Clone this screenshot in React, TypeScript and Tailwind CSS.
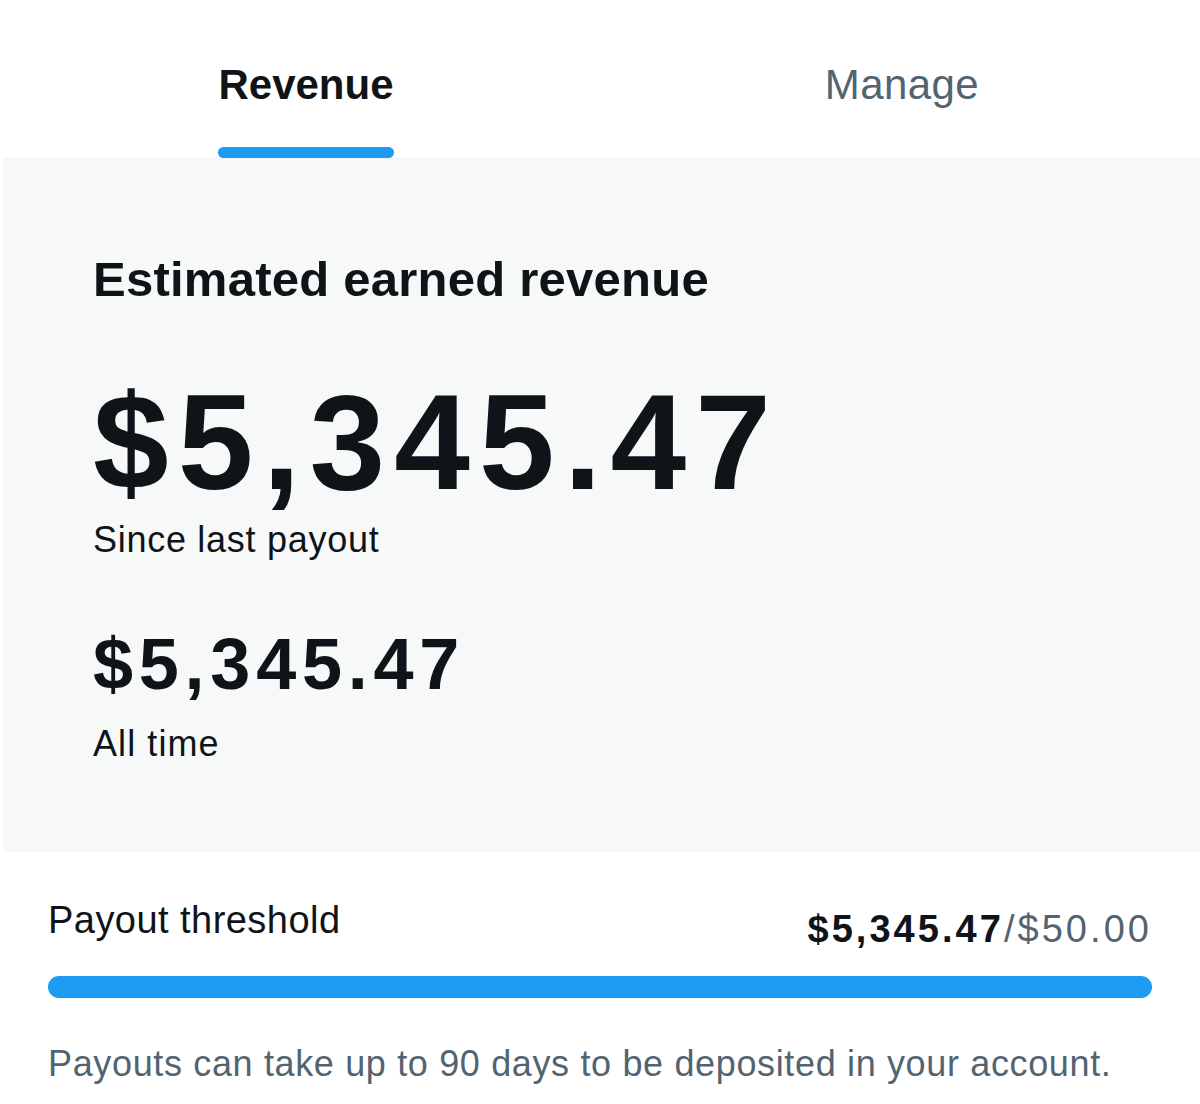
const FONT = "font-['Liberation_Sans',Arial,sans-serif]";

function Tab({ label, active }: { label: string; active?: boolean }) {
  return (
    <div className="flex flex-1 justify-center">
      <div className="inline-flex flex-col pt-[64px]">
        <span
          className={`text-[42px] leading-none ${
            active ? "font-bold text-[#0f1419]" : "font-normal tracking-[0.01em] text-[#536471]"
          }`}
        >
          {label}
        </span>
        <span className={`mt-[41px] h-[11px] rounded-full ${active ? "bg-[#1d9bf0]" : "bg-transparent"}`} />
      </div>
    </div>
  );
}

export default function App() {
  return (
    <div className={`${FONT} w-[1200px] h-[1104px] overflow-hidden bg-white text-[#0f1419]`}>
      {/* Tabs */}
      <div className="flex pl-[8px]">
        <Tab label="Revenue" active />
        <Tab label="Manage" />
      </div>

      {/* Earnings summary */}
      <div className="ml-[3px] border-t border-[#eff3f4] bg-[#f7f9f9] pl-[90px] pt-[96px] pb-[90px]">
        <h2 className="text-[49px] font-bold leading-none tracking-[0.005em]">Estimated earned revenue</h2>
        <div className="mt-[70px] text-[136px] font-bold leading-none tracking-[0.067em]">$5,345.47</div>
        <div className="mt-[12px] text-[36px] leading-none tracking-[0.02em]">Since last payout</div>
        <div className="mt-[70px] text-[72px] font-bold leading-none tracking-[0.08em]">$5,345.47</div>
        <div className="mt-[26px] text-[36px] leading-none tracking-[0.03em]">All time</div>
      </div>

      {/* Payout threshold */}
      <div className="px-[48px] pt-[49px]">
        <div className="flex items-start justify-between">
          <span className="text-[38px] leading-none tracking-[0.012em]">Payout threshold</span>
          <span className="mt-[9px] text-[38px] leading-none tracking-[0.08em]">
            <span className="font-bold text-[#0f1419]">$5,345.47</span>
            <span className="text-[#536471]">/$50.00</span>
          </span>
        </div>
        <div className="mt-[28px] h-[22px] rounded-full bg-[#eff3f4]">
          <div className="h-full rounded-full bg-[#1d9bf0]" style={{ width: "100%" }} />
        </div>
        <p className="mt-[48px] text-[36px] leading-none tracking-[0.018em] text-[#536471]">
          Payouts can take up to 90 days to be deposited in your account.
        </p>
      </div>
    </div>
  );
}
